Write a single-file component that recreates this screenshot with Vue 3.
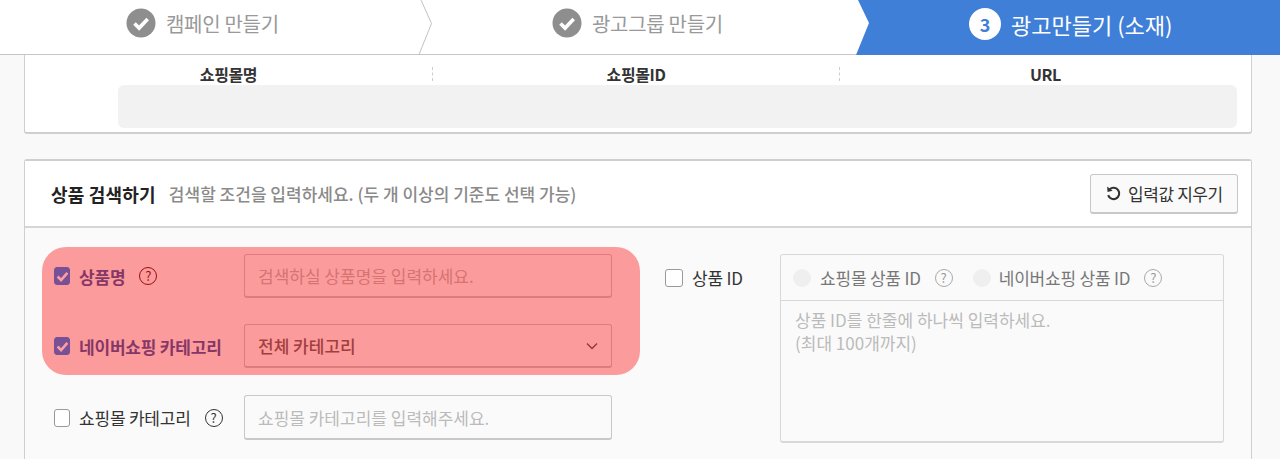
<script setup>
const columns = ['쇼핑몰명', '쇼핑몰ID', 'URL']
</script>

<template>
  <div class="page">
    <div class="steps">
      <div class="step step-one">
        <svg class="check" width="30" height="30" viewBox="0 0 30 30">
          <circle cx="15" cy="15" r="14.5" fill="#8e8e8e" />
          <path d="M8.5 15.5l4.6 4.6 8.6-9.2" fill="none" stroke="#fff" stroke-width="3.6" />
        </svg>
        <span>캠페인 만들기</span>
        <svg class="chevron" width="16" height="55" viewBox="0 0 16 55">
          <path d="M3 0l10.5 23.500L1 54.500" fill="none" stroke="#c2c2c2" stroke-width="1" />
        </svg>
      </div>
      <div class="step step-two">
        <svg class="check" width="30" height="30" viewBox="0 0 30 30">
          <circle cx="15" cy="15" r="14.5" fill="#8e8e8e" />
          <path d="M8.5 15.5l4.6 4.6 8.6-9.2" fill="none" stroke="#fff" stroke-width="3.6" />
        </svg>
        <span>광고그룹 만들기</span>
      </div>
      <div class="step step-three">
        <span class="step-num">3</span>
        <span>광고만들기 (소재)</span>
      </div>
    </div>

    <section class="card card-top">
      <div class="col-heads">
        <div v-for="col in columns" :key="col" class="col-head">{{ col }}</div>
      </div>
      <div class="empty-box"></div>
    </section>

    <section class="card card-search">
      <header class="search-head">
        <h2>상품 검색하기</h2>
        <p>검색할 조건을 입력하세요. (두 개 이상의 기준도 선택 가능)</p>
        <button class="reset-btn">
          <svg width="17" height="17" viewBox="0 0 16 16">
            <path d="M4.300 4.200A5.300 5.300 0 1 1 3 9.500" fill="none" stroke="#333" stroke-width="2" />
            <path d="M2 1.500l.4 5 4.800-1z" fill="#333" />
          </svg>
          입력값 지우기
        </button>
      </header>

      <div class="search-body">
        <div class="left-form">
          <div class="row">
            <div class="row-label on">
              <span class="box checked">
                <svg width="13" height="13" viewBox="0 0 12 12"><path d="M1.500 6l3.200 3.300 5.800-6.600" fill="none" stroke="#fff" stroke-width="2.400" /></svg>
              </span>
              <span class="name">상품명</span>
              <span class="help on-help">?</span>
            </div>
            <div class="field placeholder">검색하실 상품명을 입력하세요.</div>
          </div>
          <div class="row">
            <div class="row-label on">
              <span class="box checked">
                <svg width="13" height="13" viewBox="0 0 12 12"><path d="M1.500 6l3.200 3.300 5.800-6.600" fill="none" stroke="#fff" stroke-width="2.400" /></svg>
              </span>
              <span class="name">네이버쇼핑 카테고리</span>
            </div>
            <div class="field select">
              전체 카테고리
              <svg width="12" height="8" viewBox="0 0 12 8"><path d="M1 1.500l5 5 5-5" fill="none" stroke="#555" stroke-width="1.300" /></svg>
            </div>
          </div>
          <div class="row">
            <div class="row-label">
              <span class="box"></span>
              <span class="name">쇼핑몰 카테고리</span>
              <span class="help">?</span>
            </div>
            <div class="field placeholder">쇼핑몰 카테고리를 입력해주세요.</div>
          </div>
        </div>

        <div class="right-form">
          <div class="row-label id-label">
            <span class="box"></span>
            <span class="name">상품 ID</span>
          </div>
          <div class="id-box">
            <div class="id-types">
              <span class="radio"></span>
              <span class="id-name">쇼핑몰 상품 ID</span>
              <span class="help dim">?</span>
              <span class="radio second"></span>
              <span class="id-name">네이버쇼핑 상품 ID</span>
              <span class="help dim">?</span>
            </div>
            <div class="id-input">상품 ID를 한줄에 하나씩 입력하세요.<br />(최대 100개까지)</div>
          </div>
        </div>

        <div class="highlight"></div>
      </div>
    </section>
  </div>
</template>

<style>
html, body {
  margin: 0;
  background: #f9f9f9;
}
</style>

<style scoped>
.page {
  width: 1280px;
  height: 459px;
  overflow: hidden;
  background: #f9f9f9;
  font-family: "Noto Sans CJK KR", "Noto Sans", sans-serif;
  color: #333;
}

.steps {
  display: flex;
  height: 54px;
  background: #fff;
  border-bottom: 1px solid #c6c6c6;
  font-size: 20px;
  letter-spacing: -0.3px;
  color: #999;
}

.step {
  position: relative;
  display: flex;
  align-items: center;
  height: 46px;
  gap: 10px;
}

.step-one {
  width: 433px;
  padding-left: 126px;
  box-sizing: border-box;
}

.step-two {
  width: 423px;
  padding-left: 119px;
  box-sizing: border-box;
}

.step-three {
  flex: 1;
  height: 55px;
  padding: 0 0 8px 113px;
  box-sizing: border-box;
  gap: 10px;
  background: #3f7fd8;
  color: #fff;
  font-size: 22px;
  letter-spacing: 0;
  clip-path: polygon(2px 0, 100% 0, 100% 100%, 0 100%, 13px 23px);
}

.chevron {
  position: absolute;
  top: 0;
  right: -1px;
}

.step-num {
  width: 32px;
  height: 32px;
  border-radius: 50%;
  background: #fff;
  color: #3f7fd8;
  font-size: 18px;
  font-weight: 700;
  line-height: 32px;
  text-align: center;
}

.card {
  margin-left: 24px;
  width: 1228px;
  box-sizing: border-box;
  border: 1px solid #cfcfcf;
  border-radius: 3px;
  background: #fff;
}

.card-top {
  height: 79px;
  border-top: 0;
  border-radius: 0 0 3px 3px;
  border-bottom-width: 2px;
}

.col-heads {
  display: grid;
  grid-template-columns: 408px 407px 1fr;
  height: 30px;
  align-items: center;
}

.col-head {
  height: 14px;
  line-height: 14px;
  margin-top: 7px;
  font-size: 16px;
  font-weight: 700;
  letter-spacing: -0.4px;
  text-align: center;
  color: #333;
  border-right: 1px dashed #ccc;
}

.col-head:last-child {
  border-right: 0;
}

.empty-box {
  height: 43px;
  margin: 0 14px 0 93px;
  border-radius: 6px;
  background: #f2f2f2;
}

.card-search {
  margin-top: 25px;
  height: 320px;
  background: #fafafa;
  border-top-width: 2px;
}

.search-head {
  display: flex;
  align-items: center;
  height: 65px;
  padding: 0 13px 0 26px;
  background: #fff;
  border-bottom: 2px solid #d6d6d6;
}

.search-head h2 {
  margin: 0;
  font-size: 18px;
  font-weight: 700;
  letter-spacing: 0.2px;
  color: #222;
}

.search-head p {
  margin: 0 0 0 13px;
  font-size: 17px;
  font-weight: 500;
  color: #8a8a8a;
}

.reset-btn {
  display: flex;
  align-items: center;
  gap: 6px;
  margin-left: auto;
  width: 148px;
  height: 40px;
  padding: 0 0 0 14px;
  box-sizing: border-box;
  background: #fafafa;
  border: 1px solid #c8c8c8;
  border-bottom-width: 2px;
  border-radius: 3px;
  font-family: inherit;
  font-size: 17px;
  letter-spacing: -0.4px;
  color: #333;
  white-space: nowrap;
}

.search-body {
  position: relative;
  display: flex;
  padding: 26px 0 0 29px;
}

.left-form {
  display: flex;
  flex-direction: column;
  gap: 26px;
  width: 582px;
  margin-right: 29px;
}

.row {
  display: flex;
  height: 44px;
}

.row:last-child {
  margin-top: 1px;
  height: 45px;
}

.row-label {
  display: flex;
  align-items: center;
  width: 190px;
  font-size: 17px;
  letter-spacing: -0.2px;
  color: #333;
}

.row-label.on .name {
  font-weight: 700;
  color: #3a5aa8;
}

.box {
  display: flex;
  align-items: center;
  justify-content: center;
  flex: none;
  width: 16px;
  height: 18px;
  margin-right: 9px;
  background: #fff;
  border: 1px solid #999;
  border-radius: 3px;
  box-sizing: border-box;
}

.box.checked {
  background: #2581f2;
  border-color: #2581f2;
}

.help {
  flex: none;
  width: 18px;
  height: 18px;
  margin-left: 14px;
  border: 1.500px solid #333;
  border-radius: 50%;
  box-sizing: border-box;
  font-size: 13px;
  line-height: 15px;
  text-align: center;
  letter-spacing: 0;
}

.on-help {
  border-color: #5a1818;
  color: #5a1818;
}

.help.dim {
  border-color: #aaa;
  border-width: 1px;
  color: #999;
  line-height: 16px;
}

.field {
  display: flex;
  align-items: center;
  justify-content: space-between;
  width: 368px;
  padding: 0 13px;
  box-sizing: border-box;
  background: #fafafa;
  border: 1px solid #c8c8c8;
  border-bottom-width: 2px;
  border-radius: 3px;
  font-size: 17px;
  font-weight: 500;
  color: #666;
}

.placeholder {
  font-weight: 400;
  color: #bbb;
}

.right-form {
  display: flex;
}

.id-label {
  align-items: flex-start;
  width: 115px;
  height: 45px;
  padding-top: 13px;
  box-sizing: border-box;
}

.id-label .box {
  margin: 2px 9px 0 0;
  width: 18px;
}

.id-label .name {
  line-height: 22px;
}

.id-box {
  width: 444px;
  height: 189px;
  box-sizing: border-box;
  border: 1px solid #d8d8d8;
  border-bottom-width: 2px;
  border-radius: 3px;
}

.id-types {
  display: flex;
  align-items: center;
  height: 45px;
  padding-left: 12px;
  border-bottom: 1px solid #d8d8d8;
  font-size: 17px;
  letter-spacing: -0.2px;
  color: #777;
  white-space: nowrap;
}

.radio {
  flex: none;
  width: 18px;
  height: 18px;
  margin-right: 9px;
  border-radius: 50%;
  background: #efefef;
}

.radio.second {
  margin-left: 20px;
  margin-right: 8px;
}

.id-input {
  padding: 7px 14px;
  font-size: 17px;
  line-height: 23px;
  color: #bbb;
}

.highlight {
  position: absolute;
  left: 17px;
  top: 19px;
  width: 598px;
  height: 128px;
  border-radius: 24px;
  background: rgba(255, 0, 0, 0.38);
}
</style>
